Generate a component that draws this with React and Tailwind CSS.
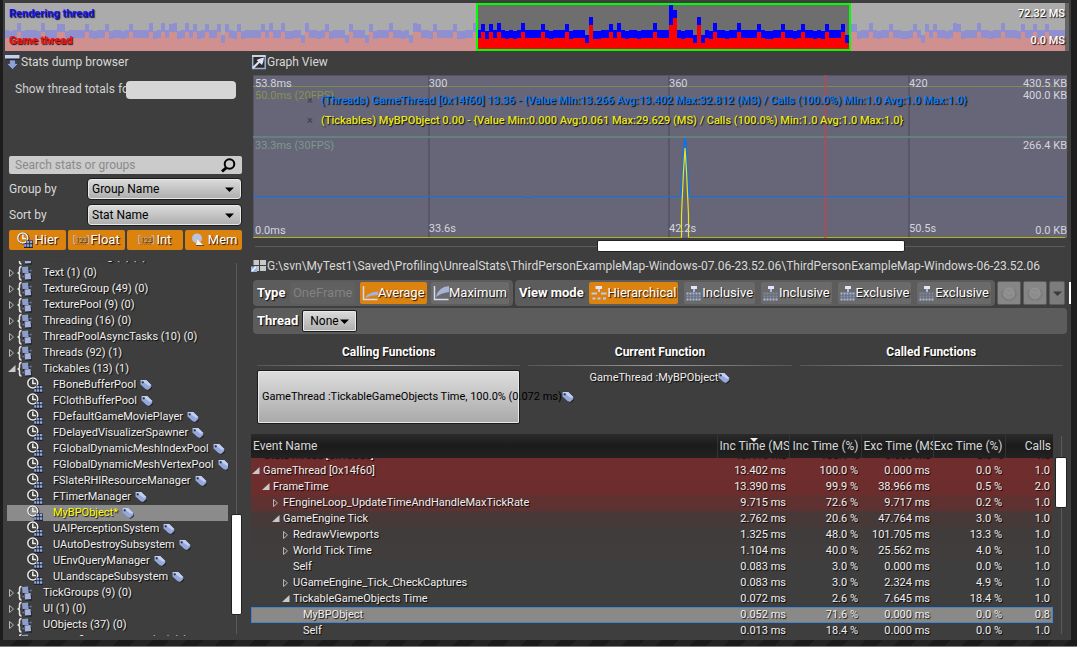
import React from 'react';

const SHADOW = '[text-shadow:1px_1px_1px_rgba(0,0,0,0.9)]';

/* ---------- frame history strip ---------- */

const SPIKES = new Set([
  3, 9, 13, 14, 20, 25, 31, 36, 39, 41, 42, 45, 47, 50, 53, 55, 58, 64, 66, 69, 75, 80, 86, 91, 96, 102, 103, 107, 112,
  117, 119, 121, 123, 129, 134, 140, 151, 153, 162, 177, 183, 188, 194, 199, 205, 209, 211, 212, 216, 221, 227, 230,
  232, 237, 238, 243, 249, 254, 257, 260,
]);
const DIPS = new Set([54, 74, 85, 90, 101, 145, 172, 174, 210, 229]);
const PEAKS = { 146: [14, 22], 173: [14, 22], 166: [2, 22], 167: [7, 15] };

const BARS = Array.from({ length: 265 }, (_, i) => {
  if (PEAKS[i]) return PEAKS[i];
  if (SPIKES.has(i)) return [i % 3 ? 21 : 20, 29];
  if (DIPS.has(i)) return [32, 40];
  return i % 7 === 1 || i % 11 === 4 ? [28, 36] : [27, 35];
});

function FrameStrip() {
  return (
    <div className="flex h-12 shrink-0 bg-[#646464] pr-1">
      <div className="relative flex-1">
        <svg className="block h-full w-full" viewBox="0 0 1060 48" preserveAspectRatio="none" shapeRendering="crispEdges">
          <rect width="1060" height="48" fill="#6e6e6e" />
          {BARS.map(([blue, red], i) => (
            <g key={i}>
              <rect x={i * 4} y={blue} width="4" height={48 - blue} fill="#0000ff" />
              <rect x={i * 4} y={red} width="4" height={48 - red} fill="#ff0000" />
            </g>
          ))}
          <rect width="471" height="48" fill="#c0c0c0" opacity="0.75" />
          <rect x="846" width="214" height="48" fill="#c0c0c0" opacity="0.75" />
          <rect x="472" y="1" width="373" height="46" fill="none" stroke="#00ff00" strokeWidth="2" />
        </svg>
        <div className={`absolute inset-0 flex flex-col justify-between pt-[3px] pb-0.5 pl-1 text-[11px] leading-4 font-bold ${SHADOW}`}>
          <div className="flex justify-between">
            <span className="text-[#1414f0]">Rendering thread</span>
            <span className="font-medium text-white">72.32 MS</span>
          </div>
          <div className="flex justify-between">
            <span className="text-[#f01010]">Game thread</span>
            <span className="font-medium text-white">0.0 MS</span>
          </div>
        </div>
      </div>
    </div>
  );
}

/* ---------- icons ---------- */

function DumpIcon() {
  return (
    <svg className="h-4 w-4 shrink-0" viewBox="0 0 16 16">
      <path d="M1 2h14v4H1z" fill="#111" opacity=".5" />
      <path d="M0 1h14.500v3.500H0z" fill="#c3d0f0" />
      <path d="M4.500 6h6v3.500h3L7.500 15.500 1.500 9.500h3z" fill="#8ba0d6" stroke="#20242e" strokeWidth=".6" />
    </svg>
  );
}

function GraphIcon() {
  return (
    <svg className="h-4 w-4 shrink-0" viewBox="0 0 16 16">
      <rect x="1.700" y="2" width="12.500" height="12.500" fill="#2c2c2c" stroke="#9fb0d8" strokeWidth="1.500" />
      <path d="M1 2h13.500" stroke="#e8e8e8" strokeWidth="1.500" />
      <path d="M2 14L9 7" stroke="#dfe4f0" strokeWidth="2" />
      <path d="M13 3.500Q12.500 8 11 11L5.500 6Q9 4 13 3.500z" fill="#dfe4f0" />
    </svg>
  );
}

function WindowsIcon() {
  return (
    <svg className="h-4 w-4 shrink-0" viewBox="0 0 16 16">
      <path d="M2.500 2h5.500v5H2.500zM9 2h6v5H9zM3 8h5v5H3zM9 8h6v5H9z" fill="#c8c8c8" />
      <path d="M0 8.500h6V14H0z" fill="#9db2e8" />
      <path d="M1 13l4-4" stroke="#fff" strokeWidth="1.200" />
    </svg>
  );
}

function GroupIcon() {
  return (
    <svg className="h-4 w-4 shrink-0" viewBox="0 0 16 16">
      <path d="M4.500 1.500Q2.500 1.500 2.500 4v2Q2.500 8 .5 8q2 0 2 2v2.500q0 2.500 2 2.500" fill="none" stroke="#e8e8e8" strokeWidth="1.500" />
      <path d="M6 3h7v7h2v6H8v-5H6z" fill="#1c1f28" opacity=".6" />
      <path d="M5 2l6-.5.700 6.500H5.500z" fill="#8c9dcc" />
      <path d="M7.500 8.500l6-.5.500 6-6 .5z" fill="#a3b3de" />
      <path d="M12.500 5.500h2M5.500 11.500h1.500" stroke="#7384b4" strokeWidth="1.500" />
    </svg>
  );
}

function ClockIcon() {
  return (
    <svg className="h-4 w-4 shrink-0" viewBox="0 0 16 16">
      <circle cx="6.500" cy="6.500" r="5.200" fill="none" stroke="#1c1c1c" strokeWidth="1.500" />
      <circle cx="5.800" cy="6" r="5" fill="none" stroke="#ececec" strokeWidth="1.500" />
      <path d="M5.800 2.500V6.500H9" fill="none" stroke="#ececec" strokeWidth="1.500" />
      <path d="M9 8.500h7V16H7v-4h2z" fill="#1f2433" />
      <path d="M9.500 9h2.500v2.200H9.500zM12.800 9h2.500v2.200h-2.500zM7.200 12.300h2.200v2.500H7.200zM10 12.300h2.300v2.500H10zM13 12.300h2.300v2.500H13z" fill="#93a6dc" />
    </svg>
  );
}

function TagIcon() {
  return (
    <svg className="h-3 w-3 shrink-0" viewBox="0 0 12 12">
      <path d="M2 2L6.500 1.500 12 7v2.500L8.500 12 2.500 7z" fill="#1a1a1a" opacity=".7" />
      <path d="M.5 1h5.700L11.300 6v2L8 11 5.500 10 .5 5.500z" fill="#94a8dc" />
      <path d="M.5 1h5.700L11.300 6 9 7z" fill="#c3cfef" />
      <circle cx="2.800" cy="3.300" r="1.100" fill="#2b2f3c" />
    </svg>
  );
}

function NumberIcon() {
  return (
    <svg className="h-4 w-4 shrink-0" viewBox="0 0 16 16">
      <path d="M2.500 3.500H.5v8h2M13.500 3.500h2v8h-2" fill="none" stroke="#b4b4bc" />
      <text x="8" y="10" fontSize="7" fontFamily="Roboto, sans-serif" textAnchor="middle" fill="#b4b4bc">123</text>
      <path d="M2 12.500h12" stroke="#8c6a3c" strokeDasharray="1 1" />
    </svg>
  );
}

function MemoryIcon() {
  return (
    <svg className="h-4 w-4 shrink-0" viewBox="0 0 16 16">
      <path d="M2 6a5 5 0 0 1 10 1q0 2-2 3L7 7l-1 4Q2 10 2 6z" fill="#b9c3de" />
      <path d="M7 7l6 6H6z" fill="#f2f2f2" />
      <path d="M6 13.500h8" stroke="#6b4a18" />
    </svg>
  );
}

function CurveIcon({ top }) {
  return (
    <svg className="h-4 w-4 shrink-0" viewBox="0 0 16 16">
      <path d={top ? 'M3 12Q5 2 16 1v6Q8 8 3 12z' : 'M3 13Q6 7 16 6.500V10Q9 10 3 13z'} fill="#a6b3d6" />
      <path d="M1.500 1v13.500H15.500" fill="none" stroke="#d3dcf5" strokeWidth="1.500" />
    </svg>
  );
}

function TreeIcon() {
  return (
    <svg className="h-4 w-4 shrink-0" viewBox="0 0 16 16">
      <path d="M4.500 1h6.500v3H4.500z" fill="#dfe6fb" />
      <path d="M8 4v3" stroke="#dfe6fb" strokeWidth="1.500" />
      <path d="M.5 8.500h5.500M10 8.500h5.500M1.500 13.500h3M6.500 13.500h3M12 13.500h3" stroke="#bccaf0" strokeWidth="2" />
    </svg>
  );
}

function FlatIcon({ faded }) {
  return (
    <svg className="h-4 w-4 shrink-0" viewBox="0 0 16 16">
      <path d="M5 1h6v3H5z" fill="#dfe6fb" />
      <path d="M8 4v3" stroke="#a9b9e6" strokeWidth="2" />
      <path d="M.5 8.500h15" stroke={faded ? '#7f889f' : '#a9b9e6'} strokeWidth="2" strokeDasharray="2 1" />
      <path d="M.5 11.500h15" stroke={faded ? '#7f889f' : '#8293c6'} strokeWidth="2" strokeDasharray="2 1" />
      <path d="M.5 14.500h15" stroke="#a9b9e6" strokeWidth="2" strokeDasharray="2 1" />
    </svg>
  );
}

function DialIcon() {
  return (
    <svg className="h-4 w-4" viewBox="0 0 16 16">
      <path d="M2.500 5a7 6.500 0 1 0 11 0" fill="none" stroke="#7c7c7c" strokeWidth="1.500" />
      <circle cx="8" cy="8" r="5" fill="#8c8c8c" stroke="#979797" />
      <path d="M5 6l3 3 3-3" fill="none" stroke="#989898" />
    </svg>
  );
}

function Expander({ open }) {
  return (
    <svg className="h-2 w-2 shrink-0" viewBox="0 0 8 8">
      {open ? <path d="M7.500 0v7H0z" fill="#c9c9c9" /> : <path d="M1.500.5L5.500 4 1.500 7.500z" fill="none" stroke="#b5b5b5" />}
    </svg>
  );
}

function Caret({ color = '#000' }) {
  return (
    <svg className="h-[5px] w-[9px] shrink-0" viewBox="0 0 9 5">
      <path d="M0 .5h9L4.500 5z" fill={color} />
    </svg>
  );
}

/* ---------- left panel ---------- */

const GROUPS_ABOVE = ['Text (1) (0)', 'TextureGroup (49) (0)', 'TexturePool (9) (0)', 'Threading (16) (0)', 'ThreadPoolAsyncTasks (10) (0)', 'Threads (92) (1)'];
const TICKABLES = [
  'FBoneBufferPool', 'FClothBufferPool', 'FDefaultGameMoviePlayer', 'FDelayedVisualizerSpawner', 'FGlobalDynamicMeshIndexPool',
  'FGlobalDynamicMeshVertexPool', 'FSlateRHIResourceManager', 'FTimerManager', 'MyBPObject*', 'UAIPerceptionSystem',
  'UAutoDestroySubsystem', 'UEnvQueryManager', 'ULandscapeSubsystem',
];
const GROUPS_BELOW = ['TickGroups (9) (0)', 'UI (1) (0)', 'UObjects (37) (0)'];

function GroupRow({ label, open }) {
  return (
    <li className="flex h-4 shrink-0 items-center pl-px whitespace-nowrap">
      <Expander open={open} />
      <span className="ml-px flex"><GroupIcon /></span>
      <span className="ml-2.5">{label}</span>
    </li>
  );
}

function StatRow({ label }) {
  const selected = label === 'MyBPObject*';
  return (
    <li className={`flex h-4 shrink-0 items-center overflow-hidden pl-5 whitespace-nowrap ${selected ? 'bg-[#8b8b8b] text-[#ffff00]' : ''}`}>
      <ClockIcon />
      <span className="mr-1 ml-2.5">{label}</span>
      <TagIcon />
    </li>
  );
}

function SelectBox({ id, label, value }) {
  return (
    <div className="flex h-[22px] items-center">
      <label htmlFor={id} className="w-[78px] text-[#d8d8d8]">{label}</label>
      <div className="relative flex flex-1">
        <select id={id} defaultValue={value} className="h-[22px] w-full appearance-none rounded-sm border border-[#1c1c1c] bg-linear-to-b from-[#dcdcdc] to-[#adadad] pl-1 text-black inset-ring inset-ring-[#e8e8e8]">
          <option>{value}</option>
        </select>
        <span className="pointer-events-none absolute inset-y-0 right-2 flex items-center"><Caret /></span>
      </div>
    </div>
  );
}

function FilterButton({ icon, label }) {
  return (
    <button type="button" className={`flex h-5 flex-1 items-center justify-center gap-0.5 rounded-xs bg-[#db820f] text-[13px] text-white ${SHADOW}`}>
      {icon}{label}
    </button>
  );
}

function StatsBrowser() {
  return (
    <aside className="flex w-[241px] shrink-0 flex-col text-[12px]">
      <h2 className="flex h-[22px] items-center text-[12px] text-[#d8d8d8]"><DumpIcon />Stats dump browser</h2>
      <div className="mt-2 flex items-start pl-2.5">
        <label htmlFor="totals" className="w-[111px] overflow-hidden leading-4 whitespace-nowrap text-[#d0d0d0]">Show thread totals for</label>
        <input id="totals" className="h-[18px] w-[110px] rounded-sm bg-[#d6d6d6] px-1" />
      </div>
      <div className="mt-[57px] flex flex-col pr-1 pl-1">
        <div className="relative flex">
          <input aria-label="Search stats or groups" placeholder="Search stats or groups" className="h-[18px] w-full rounded-xs bg-[#cbcbcb] px-1.5 text-[12px] text-black placeholder:text-[#8a8a8a]" />
          <svg className="absolute top-0.5 right-1.5 h-4 w-4" viewBox="0 0 16 16">
            <circle cx="9.500" cy="6" r="4.800" fill="none" stroke="#000" strokeWidth="2" />
            <path d="M6.500 9.500L2 13.500" stroke="#000" strokeWidth="3" />
          </svg>
        </div>
        <div className="mt-1 flex flex-col gap-1">
          <SelectBox id="group" label="Group by" value="Group Name" />
          <SelectBox id="sort" label="Sort by" value="Stat Name" />
        </div>
        <div className="mt-1 flex gap-0.5">
          <FilterButton icon={<ClockIcon />} label="Hier" />
          <FilterButton icon={<NumberIcon />} label="Float" />
          <FilterButton icon={<NumberIcon />} label="Int" />
          <FilterButton icon={<MemoryIcon />} label="Mem" />
        </div>
      </div>
      <div className="mt-[11px] mb-1 flex min-h-0 flex-1">
        <ul className={`ml-0.5 flex w-[221px] flex-col overflow-hidden text-[11px] leading-[14px] text-[#f0f0f0] ${SHADOW}`}>
          <li className="flex h-1 shrink-0 flex-col justify-end overflow-hidden">
            <div className="flex h-4 shrink-0 items-center pl-2.5"><GroupIcon /><span className="ml-2.5">TextRendering (5) (0)</span></div>
          </li>
          {GROUPS_ABOVE.map((g) => <GroupRow key={g} label={g} />)}
          <GroupRow label="Tickables (13) (1)" open />
          {TICKABLES.map((s) => <StatRow key={s} label={s} />)}
          {GROUPS_BELOW.map((g) => <GroupRow key={g} label={g} />)}
          <GroupRow label="UserDefinedStatistics (10) (0)" />
        </ul>
        <div className="ml-[3px] flex w-[11px] flex-col items-center pt-0.5 pb-0.5">
          <div className="w-px grow-[252] bg-[#5a5a5a]" />
          <div className="w-full grow-[99] rounded-xs border border-[#222] bg-white" />
          <div className="w-px grow-[19] bg-[#5a5a5a]" />
        </div>
      </div>
    </aside>
  );
}

/* ---------- graph ---------- */

function GraphView() {
  return (
    <div className="relative mr-1 ml-0.5 h-[163px] bg-[#676578] text-[11px] leading-[14px] text-[#d5d5dc]">
      <svg className="block h-full w-full" viewBox="0 0 814 163" preserveAspectRatio="none">
        <g shapeRendering="crispEdges">
          <path d="M0 0h814v1H0zM0 0h1v163H0z" fill="#555463" />
          <path d="M175 0h2v163h-2zM415 0h2v163h-2zM655 0h2v163h-2z" fill="#585666" />
          <path d="M0 11h814v1H0z" fill="#7b8a50" />
          <path d="M0 61h814v2H0z" fill="#66807d" />
          <path d="M0 121h272v1H0zM272 122h8v1h-8zM280 121h148v1H280zM436 121h376v1H436z" fill="#0a74f0" />
          <path d="M0 162h429v1H0zM436 162h376v1H436z" fill="#b4b41c" />
        </g>
        <path d="M428 121.500L431.500 64h1L436 121.500" fill="none" stroke="#0a74f0" strokeWidth="1.500" />
        <path d="M428.500 162.500V140l1-22 1-22 1.500-23 1.500 23 1 22 1 22v22.500" fill="none" stroke="#e6e619" strokeWidth="1.200" />
        <path d="M571 0h3v163h-3z" fill="#b04a52" opacity=".55" />
      </svg>
      <span className="absolute top-0.5 left-0.5">53.8ms</span>
      <span className="absolute top-3.5 left-0.5 text-[#84944f]">50.0ms (20FPS)</span>
      <span className="absolute top-16 left-0.5 text-[#769c8b]">33.3ms (30FPS)</span>
      <span className="absolute bottom-0 left-0.5">0.0ms</span>
      <span className="absolute top-0.5 left-[21.6%]">300</span>
      <span className="absolute top-0.5 left-[51.1%]">360</span>
      <span className="absolute top-0.5 left-[80.6%]">420</span>
      <span className="absolute bottom-0.5 left-[21.6%]">33.6s</span>
      <span className="absolute bottom-0.5 left-[51.1%]">42.2s</span>
      <span className="absolute bottom-0.5 left-[80.6%]">50.5s</span>
      <span className="absolute top-0.5 right-0">430.5 KB</span>
      <span className="absolute top-3.5 right-0">400.0 KB</span>
      <span className="absolute top-16 right-0">266.4 KB</span>
      <span className="absolute right-0 bottom-0">0.0 KB</span>
      <ul className={`absolute top-4 left-[54px] flex flex-col leading-5 font-medium whitespace-nowrap ${SHADOW}`}>
        <li className="flex text-[#0b7bf0]">
          <button type="button" className="w-3.5 text-left text-[#44434f] text-shadow-none">×</button>
          (Threads) GameThread [0x14f60] 13.36 - {'{'}Value Min:13.266 Avg:13.402 Max:32.812 (MS) / Calls (100.0%) Min:1.0 Avg:1.0 Max:1.0{'}'}
        </li>
        <li className="flex text-[#e8e81c]">
          <button type="button" className="w-3.5 text-left text-[#44434f] text-shadow-none">×</button>
          (Tickables) MyBPObject 0.00 - {'{'}Value Min:0.000 Avg:0.061 Max:29.629 (MS) / Calls (100.0%) Min:1.0 Avg:1.0 Max:1.0{'}'}
        </li>
      </ul>
    </div>
  );
}

/* ---------- toolbar ---------- */

function ModeButton({ icon, label, active }) {
  return (
    <button type="button" className={`flex h-[22px] items-center rounded-xs px-0.5 text-[13px] text-white ${SHADOW} ${active ? 'bg-[#db820f]' : 'bg-[#6a6a6a]'}`}>
      {icon}{label}
    </button>
  );
}

function Toolbar() {
  return (
    <div className="mt-0.5 flex flex-col gap-0.5 pl-0.5">
      <div className="flex justify-between overflow-hidden whitespace-nowrap">
        <div className="flex h-[26px] w-[260px] items-center justify-between rounded-sm bg-[#5c5c5c] pr-1 pl-1">
          <span className={`text-[13px] font-bold text-white ${SHADOW}`}>Type</span>
          <button type="button" disabled className="h-[22px] rounded-xs bg-[#606060] px-[3px] text-[13px] text-[#828282]">OneFrame</button>
          <ModeButton icon={<CurveIcon />} label="Average" active />
          <ModeButton icon={<CurveIcon top />} label="Maximum" />
        </div>
        <div className="flex h-[26px] w-[480px] items-center justify-between rounded-sm bg-[#5c5c5c] pr-1 pl-1">
          <span className={`text-[13px] font-bold text-white ${SHADOW}`}>View mode</span>
          <ModeButton icon={<TreeIcon />} label="Hierarchical" active />
          <ModeButton icon={<FlatIcon />} label="Inclusive" />
          <ModeButton icon={<FlatIcon faded />} label="Inclusive" />
          <ModeButton icon={<FlatIcon />} label="Exclusive" />
          <ModeButton icon={<FlatIcon faded />} label="Exclusive" />
        </div>
        <div className="flex items-center gap-0.5">
          <button type="button" aria-label="Back" className="flex h-6 w-6 items-center justify-center rounded-xs border border-[#5c5c5c] bg-[#868686]"><DialIcon /></button>
          <button type="button" aria-label="Forward" className="flex h-6 w-6 items-center justify-center rounded-xs border border-[#5c5c5c] bg-[#868686]"><DialIcon /></button>
          <button type="button" aria-label="History" className="flex h-6 w-4 items-center justify-center rounded-xs border border-[#5c5c5c] bg-[#7c7c7c]"><Caret color="#3a3a3a" /></button>
          <span className="ml-0.5 h-[22px] w-0.5 bg-white" />
        </div>
      </div>
      <div className="mr-1 flex h-[26px] items-center gap-1 rounded-sm bg-[#5c5c5c] pl-1">
        <span className={`text-[13px] font-bold text-white ${SHADOW}`}>Thread</span>
        <button type="button" className="flex h-[22px] items-center gap-px rounded-xs border border-[#1c1c1c] bg-linear-to-b from-[#dcdcdc] to-[#adadad] px-[7px] text-[12px] text-black inset-ring inset-ring-[#e8e8e8]">
          None<Caret />
        </button>
      </div>
    </div>
  );
}

function FunctionColumn({ title, children }) {
  return (
    <section className="flex min-w-0 flex-1 flex-col items-center">
      <h3 className={`flex h-[26px] items-center text-[12px] font-bold text-white ${SHADOW}`}>{title}</h3>
      <div className="h-px w-full bg-linear-to-r from-[#555] via-[#a0a0a0] to-[#555]" />
      {children}
    </section>
  );
}

/* ---------- event table ---------- */

const EVENTS = [
  ['GameThread [0x14f60]', 0, 'open', '13.402 ms', '100.0 %', '0.000 ms', '0.0 %', '1.0', 'bg-[#6f2d2d]'],
  ['FrameTime', 1, 'open', '13.390 ms', '99.9 %', '38.966 ms', '0.5 %', '2.0', 'bg-[#6e2d2d]'],
  ['FEngineLoop_UpdateTimeAndHandleMaxTickRate', 2, 'shut', '9.715 ms', '72.6 %', '9.717 ms', '0.2 %', '1.0', 'bg-[#603131]'],
  ['GameEngine Tick', 2, 'open', '2.762 ms', '20.6 %', '47.764 ms', '3.0 %', '1.0', 'bg-[#483939]'],
  ['RedrawViewports', 3, 'shut', '1.325 ms', '48.0 %', '101.705 ms', '13.3 %', '1.0', 'bg-[#403c3b]'],
  ['World Tick Time', 3, 'shut', '1.104 ms', '40.0 %', '25.562 ms', '4.0 %', '1.0', 'bg-[#403d3c]'],
  ['Self', 3, '', '0.083 ms', '3.0 %', '0.000 ms', '0.0 %', '1.0', ''],
  ['UGameEngine_Tick_CheckCaptures', 3, 'shut', '0.083 ms', '3.0 %', '2.324 ms', '4.9 %', '1.0', ''],
  ['TickableGameObjects Time', 3, 'open', '0.072 ms', '2.6 %', '7.645 ms', '18.4 %', '1.0', ''],
  ['MyBPObject', 4, '', '0.052 ms', '71.6 %', '0.000 ms', '0.0 %', '0.8', 'bg-[#898989] outline outline-[#3f86cf] -outline-offset-1'],
  ['Self', 4, '', '0.013 ms', '18.4 %', '0.000 ms', '0.0 %', '1.0', ''],
];
const INDENT = ['pl-px', 'pl-[11px]', 'pl-[21px]', 'pl-[31px]', 'pl-[41px]'];
const PARTIAL = ['13.413 ms', '100.1 %', '0.000 ms', '0.0 %', '1.0'];

function EventTable() {
  return (
    <div className="mt-2.5 flex min-h-0 flex-1 overflow-hidden">
      <div className="min-w-0 flex-1">
        <table className="w-full table-fixed border-collapse whitespace-nowrap">
          <thead>
            <tr className="h-6 bg-linear-to-b from-[#2b2b2b] via-[#1b1b1b] to-[#222] text-[12px] text-[#d8d8d8]">
              <th className="p-0 pl-0.5 text-left font-normal">Event Name</th>
              <th className="relative w-[72px] overflow-hidden border-l border-[#333] p-0 pl-0.5 text-left font-normal">
                Inc Time (MS)
                <svg className="absolute top-1 left-8 h-1 w-2" viewBox="0 0 8 4"><path d="M0 0h8L4 4z" fill="#eee" /></svg>
              </th>
              <th className="w-[72px] border-l border-[#333] p-0 pr-0.5 text-right font-normal">Inc Time (%)</th>
              <th className="w-[72px] overflow-hidden border-l border-[#333] p-0 pl-0.5 text-left font-normal">Exc Time (MS)</th>
              <th className="w-[72px] border-l border-[#333] p-0 pr-0.5 text-right font-normal">Exc Time (%)</th>
              <th className="w-12 border-l border-[#333] p-0 pr-0.5 text-right font-normal">Calls</th>
            </tr>
          </thead>
          <tbody className={`text-[11px] leading-4 text-[#f0f0f0] ${SHADOW}`}>
            <tr className="bg-[#6f2d2d]">
              <td className="p-0"><div className="flex h-[5px] flex-col justify-end overflow-hidden pl-3">StatsThread [0x13bd8]</div></td>
              {PARTIAL.map((v, i) => (
                <td key={i} className="p-0"><div className="flex h-[5px] flex-col justify-end overflow-hidden pr-[3px] text-right">{v}</div></td>
              ))}
            </tr>
            {EVENTS.map(([name, depth, state, ...rest], i) => (
              <tr key={i} className={`h-4 ${rest[5]}`}>
                <td className="p-0">
                  <div className={`flex items-center ${INDENT[depth]}`}>
                    <span className="flex w-[11px]">{state && <Expander open={state === 'open'} />}</span>
                    {name}
                  </div>
                </td>
                {rest.slice(0, 5).map((v, c) => <td key={c} className="p-0 pr-[3px] text-right">{v}</td>)}
              </tr>
            ))}
          </tbody>
        </table>
      </div>
      <div className="mr-1 ml-0.5 flex w-3 flex-col items-center pt-0.5 pb-1.5">
        <div className="h-[21px] w-px bg-[#5a5a5a]" />
        <div className="h-[51px] w-full rounded-xs border border-[#222] bg-white" />
        <div className="w-px flex-1 bg-[#5a5a5a]" />
      </div>
    </div>
  );
}

export default function App() {
  return (
    <div className="flex h-screen flex-col overflow-hidden border-b border-white bg-[#1d1d1d] font-[Roboto,sans-serif] antialiased">
      <div className="mr-1.5 ml-[3px] flex min-h-0 flex-1 flex-col bg-[#3e3e3e] pt-[3px] pl-0.5">
        <div className="mr-0.5 flex flex-col"><FrameStrip /></div>
        <div className="flex min-h-0 flex-1 gap-[5px]">
          <StatsBrowser />
          <main className="flex min-w-0 flex-1 flex-col">
            <h2 className="flex h-6 items-center pb-0.5 text-[12px] text-[#d8d8d8]"><GraphIcon />Graph View</h2>
            <GraphView />
            <div className="mr-1.5 ml-1 flex h-4 items-center">
              <div className="h-px grow-[343] bg-[#5a5a5a]" />
              <div className="h-3 grow-[307] rounded-xs border border-[#222] bg-white" />
              <div className="h-px grow-[161] bg-[#5a5a5a]" />
            </div>
            <div className="flex h-6 items-center text-[12px] whitespace-nowrap text-[#d8d8d8]">
              <WindowsIcon />
              G:\svn\MyTest1\Saved\Profiling\UnrealStats\ThirdPersonExampleMap-Windows-07.06-23.52.06\ThirdPersonExampleMap-Windows-06-23.52.06
            </div>
            <Toolbar />
            <div className="mt-[5px] flex gap-2 pr-2 pl-1.5 text-[11px]">
              <FunctionColumn title="Calling Functions">
                <button type="button" className="mt-1 flex h-[54px] w-full items-center rounded-xs border border-[#1c1c1c] bg-linear-to-b from-[#dedede] to-[#a9a9a9] pl-1 whitespace-nowrap text-black inset-ring inset-ring-[#e8e8e8]">
                  GameThread :TickableGameObjects Time, 100.0% (0.072 ms)<TagIcon />
                </button>
              </FunctionColumn>
              <FunctionColumn title="Current Function">
                <p className={`mt-1 flex items-center leading-4 text-[#f0f0f0] ${SHADOW}`}>GameThread :MyBPObject<TagIcon /></p>
              </FunctionColumn>
              <FunctionColumn title="Called Functions" />
            </div>
            <EventTable />
          </main>
        </div>
      </div>
      <div className="h-[7px] shrink-0 border-b border-[#7a7a7a] bg-[repeating-linear-gradient(135deg,#242424_0_12px,#1b1b1b_12px_24px)]" />
    </div>
  );
}
